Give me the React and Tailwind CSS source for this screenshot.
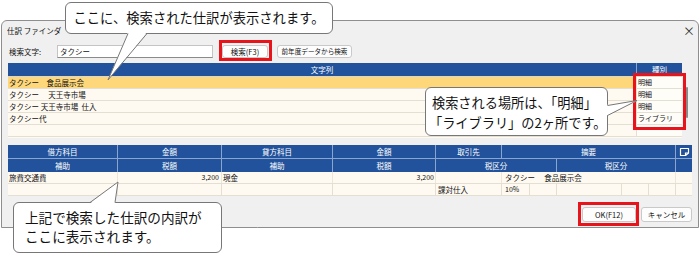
import React from "react";

const listRows = [
  { text: "タクシー　食品展示会", type: "明細", active: true },
  { text: "タクシー　 天王寺市場", type: "明細" },
  { text: "タクシー 天王寺市場  仕入", type: "明細" },
  { text: "タクシー代", type: "ライブラリ" },
  { text: "", type: "" },
];

function MemoIcon() {
  return (
    <svg width="11" height="10" viewBox="0 0 11 10">
      <path d="M1.5 1.5 H9.5 V6 L6.5 8.5 H1.5 Z" fill="none" stroke="#fff" strokeWidth="1.2" strokeLinejoin="round" />
      <path d="M9.5 6 H6.5 V8.5" fill="none" stroke="#fff" strokeWidth="1.2" />
    </svg>
  );
}

function Btn({ children, className = "", mark }) {
  return (
    <div className={"relative flex items-center justify-center bg-[#fdfdfd] border border-[#c9c9c9] rounded-[3px] leading-none whitespace-nowrap " + className}>
      {children}
      {mark && <div className={"absolute border-[3px] border-[#e8141c] " + mark} />}
    </div>
  );
}

function ResultList() {
  return (
    <div className="relative mt-[5px] flex h-[75px] bg-[#fffaf1]">
      <div className="flex-1 flex flex-col">
        <div className="flex h-[14px] bg-[#21529b] text-white leading-none border-b border-[#dcd6c8]">
          <div className="w-[629px] flex items-center justify-center border-r border-[#8aa5cf]">文字列</div>
          <div className="flex-1 flex items-center justify-center">種別</div>
        </div>
        {listRows.map((r, i) => (
          <div key={i} className="flex h-[12px] leading-none border-b border-[#e4dfd3]">
            <div className={"w-[629px] flex items-center pl-[1px] border-r border-[#e4dfd3] whitespace-pre " + (r.active ? "bg-[#ffd77b]" : "")}>
              {r.text}
            </div>
            <div className="flex-1 flex items-center pl-[1px] bg-[#fffdf8] text-[7px]">{r.type}</div>
          </div>
        ))}
      </div>
      <div className="w-[10px] bg-[#f0f0f0] flex justify-center pt-[24px]">
        <div className="w-[2px] h-[31px] bg-[#8a8a8a] rounded-full" />
      </div>
      <div className="absolute left-[625px] top-[10px] w-[53px] h-[57px] border-[3px] border-[#e8141c]" />
    </div>
  );
}

const c1 = ["w-[110px]", "w-[104px]", "w-[111px]", "w-[103px]", "w-[66px]", "w-[174px]", "w-[16px]"];
const c2 = ["w-[110px]", "w-[104px]", "w-[111px]", "w-[103px]", "w-[121px]", "w-[119px]", "w-[16px]"];

function DetailTable() {
  const head1 = ["借方科目", "金額", "貸方科目", "金額", "取引先", "摘要"];
  const head2 = ["補助", "税額", "補助", "税額", "税区分", "税区分"];
  return (
    <div className="mt-[7px] flex flex-col leading-none">
      <div className="flex h-[14px] bg-[#21529b] text-white border-b border-[#8aa5cf]">
        {head1.map((h, i) => (
          <div key={i} className={c1[i] + " flex items-center justify-center border-r border-[#8aa5cf]"}>{h}</div>
        ))}
        <div className="flex-1 flex items-center justify-center"><MemoIcon /></div>
      </div>
      <div className="flex h-[13px] bg-[#21529b] text-white">
        {head2.map((h, i) => (
          <div key={i} className={c2[i] + " flex items-center justify-center border-r border-[#8aa5cf]"}>{h}</div>
        ))}
        <div className="flex-1" />
      </div>
      <div className="flex h-[12px] bg-[#fffaf1] border-b border-[#e4dfd3]">
        <div className={c1[0] + " flex items-center pl-[1px] border-r border-[#ece7db]"}>旅費交通費</div>
        <div className={c1[1] + " flex items-center justify-end pr-[2px] border-r border-[#ece7db] text-[7px]"}>3,200</div>
        <div className={c1[2] + " flex items-center pl-[1px] border-r border-[#ece7db]"}>現金</div>
        <div className={c1[3] + " flex items-center justify-end pr-[1px] border-r border-[#ece7db] text-[7px]"}>3,200</div>
        <div className={c1[4] + " border-r border-[#ece7db]"} />
        <div className={c1[5] + " flex items-center pl-[3px] border-r border-[#ece7db] whitespace-pre"}>タクシー　 食品展示会</div>
        <div className="flex-1" />
      </div>
      <div className="flex h-[12px] bg-[#fffaf1] border-b border-[#e4dfd3]">
        <div className="w-[110px] border-r border-[#ece7db]" />
        <div className="w-[104px] border-r border-[#e4dfd3]" />
        <div className="w-[111px] border-r border-[#e4dfd3]" />
        <div className="w-[103px] border-r border-[#e4dfd3]" />
        <div className="w-[66px] flex items-center pl-[2px] border-r border-[#e4dfd3]">課対仕入</div>
        <div className="w-[28px] flex items-center pl-[3px] border-r border-[#e4dfd3] text-[7px]">10%</div>
        <div className="w-[27px] border-r border-[#e4dfd3]" />
        <div className="w-[65px] border-r border-[#e4dfd3]" />
        <div className="w-[27px] border-r border-[#e4dfd3]" />
        <div className="w-[27px] border-r border-[#e4dfd3]" />
        <div className="flex-1" />
      </div>
    </div>
  );
}

export default function App() {
  return (
    <div className="relative w-[700px] h-[255px] bg-white overflow-hidden font-['Noto_Sans_CJK_JP',sans-serif] text-[#111]">
      <div className="pt-[20px] pl-[1px]">
        <div className="w-[698px] h-[208px] bg-[#f0f0f0] border border-[#8e8e8e] rounded-t-[6px] flex flex-col px-[6px] text-[7.5px]">
          <div className="h-[19px] flex items-center justify-between -mx-[1px]">
            <span className="leading-none">仕訳 ファインダ</span>
            <span className="text-[12px] leading-none text-[#333] mr-[-2px]">×</span>
          </div>
          <div className="mt-[5px] h-[13px] flex items-center leading-none">
            <span className="w-[49px] pl-[1px]">検索文字:</span>
            <div className="w-[156px] h-full bg-white border border-[#c4c4c4] border-b-[#8a8a8a] flex items-center pl-[2px]">タクシー</div>
            <Btn className="ml-[9px] w-[46px] h-full" mark="-left-[4px] -right-[5px] -top-[6px] -bottom-[4px]">検索(F3)</Btn>
            <Btn className="ml-[9px] w-[75px] h-full text-[6.6px]">前年度データから検索</Btn>
          </div>
          <ResultList />
          <DetailTable />
          <div className="mt-[11px] flex justify-end gap-[5px]">
            <Btn className="w-[54px] h-[15px] border-[#4a86d0]" mark="-left-[5px] -right-[4px] -top-[6px] -bottom-[5px]">OK(F12)</Btn>
            <Btn className="w-[51px] h-[15px]">キャンセル</Btn>
          </div>
        </div>
      </div>

      {/* callouts */}
      <div className="absolute left-[65px] top-[2px] w-[268px] h-[32px] bg-white border border-[#777] rounded-[6px] flex items-center justify-center text-[13.3px] leading-none">
        ここに、検索された仕訳が表示されます。
      </div>
      <svg className="absolute left-[100px] top-[30px]" width="55" height="55" viewBox="0 0 55 55">
        <polygon points="28,2 47,2 8,50" fill="#fff" />
        <polyline points="28,3.5 8,50 47,3.5" fill="none" stroke="#777" strokeWidth="1" />
      </svg>

      <div className="absolute left-[425px] top-[87px] w-[183px] h-[49px] bg-white border border-[#777] rounded-[6px] pl-[6px] pt-[5px] text-[13.2px] leading-[20px]">
        <div>検索される場所は、「明細」</div>
        <div className="-ml-[3px]">「ライブラリ」の2ヶ所です。</div>
      </div>
      <svg className="absolute left-[600px] top-[95px]" width="40" height="25" viewBox="0 0 40 25">
        <polygon points="6,10 6,21 37,6" fill="#fff" />
        <polyline points="7.5,10.5 37,5.5 7.5,20.5" fill="none" stroke="#777" strokeWidth="1" />
      </svg>

      <div className="absolute left-[13px] top-[202px] w-[209px] h-[51px] bg-white border border-[#777] rounded-[6px] pl-[11px] pt-[5px] text-[13.6px] leading-[19px]">
        <div>上記で検索した仕訳の内訳が</div>
        <div>ここに表示されます。</div>
      </div>
      <svg className="absolute left-[85px] top-[178px]" width="40" height="30" viewBox="0 0 40 30">
        <polygon points="5,25.5 33,4 30,25.5" fill="#fff" />
        <polyline points="5,24.5 33,4 30,24.5" fill="none" stroke="#777" strokeWidth="1" />
      </svg>
    </div>
  );
}
